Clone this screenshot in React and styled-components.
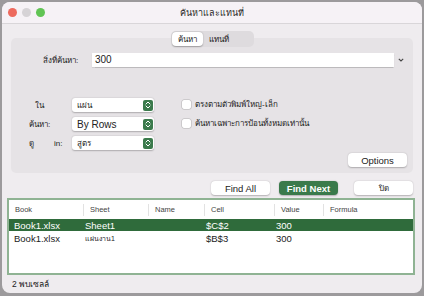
import React from "react";
import styled, { createGlobalStyle } from "styled-components";

const Global = createGlobalStyle`
  html, body { margin: 0; padding: 0; background: #9c9a9c; }
  body { font-family: "Liberation Sans", Arial, "Noto Sans", sans-serif; }
  #root { width: 424px; height: 296px; }
`;

const Frame = styled.div`
  width: 424px;
  height: 296px;
  box-sizing: border-box;
  padding: 2px 2px 3px 2px;
  background: #9c9a9c;
`;

const Window = styled.div`
  height: 100%;
  border-radius: 8px;
  background: #efecef;
  overflow: hidden;
  display: flex;
  flex-direction: column;
`;

const TitleBar = styled.div`
  height: 21px;
  flex: none;
  background: #f6f2f6;
  border-bottom: 1px solid #d9d6d9;
  display: flex;
  align-items: center;
  position: relative;
  padding-left: 6px;
  gap: 5px;
`;

const Light = styled.span`
  width: 9px;
  height: 9px;
  border-radius: 50%;
  background: ${p => p.$c};
`;

const Title = styled.div`
  position: absolute;
  left: 0;
  right: 0;
  text-align: center;
  font-size: 9px;
  color: #2a2a2a;
  pointer-events: none;
`;

const Body = styled.div`
  flex: 1;
  display: flex;
  flex-direction: column;
  padding: 7px 7px 0 7px;
`;

const Tabs = styled.div`
  align-self: center;
  position: relative;
  z-index: 1;
  display: flex;
  background: #dedbde;
  border-radius: 5px;
  padding: 1px;
  width: 83px;
  box-sizing: border-box;
  height: 16px;
`;

const Tab = styled.div`
  font-size: 8px;
  padding: 0 6px;
  display: flex;
  align-items: center;
  border-radius: 4px;
  color: #222;
  background: ${p => (p.$active ? "#ffffff" : "transparent")};
  box-shadow: ${p => (p.$active ? "0 0.5px 1.5px rgba(0,0,0,0.3)" : "none")};
`;

const Panel = styled.div`
  margin: -9px 2px 0 2px;
  background: #e6e3e6;
  border-radius: 5px;
  height: 135px;
  box-sizing: border-box;
  padding: 15px 0 6px 0;
  display: flex;
  flex-direction: column;
`;

const FindRow = styled.div`
  display: flex;
  align-items: center;
  height: 14px;
`;

const FindLabel = styled.div`
  width: 81px;
  box-sizing: border-box;
  padding-left: 32px;
  font-size: 8px;
  color: #222;
`;

const TextInput = styled.div`
  width: 302px;
  height: 14px;
  background: #fff;
  box-shadow: 0 0.5px 1px rgba(0,0,0,0.18);
  font-size: 10px;
  line-height: 14px;
  padding-left: 3px;
  box-sizing: border-box;
  color: #222;
`;

const Chevron = styled.svg`
  margin-left: 4px;
`;

const OptionsArea = styled.div`
  display: flex;
  margin-top: 31px;
`;

const SelectGrid = styled.div`
  display: grid;
  grid-template-columns: 43px 82px;
  row-gap: 5px;
  padding-left: 18px;
  align-items: center;
`;

const Label = styled.div`
  font-size: 8px;
  color: #222;
  display: flex;
  align-items: baseline;
  gap: 20px;
  padding-left: ${p => (p.$indent ? "6px" : "0")};
`;

const Select = styled.div`
  height: 14px;
  background: #fff;
  border-radius: 3px;
  box-shadow: 0 0.5px 1.5px rgba(0,0,0,0.25);
  display: flex;
  align-items: center;
  justify-content: space-between;
  padding: 0 1px 0 5px;
  font-size: ${p => (p.$small ? "8px" : "10px")};
  color: #222;
`;

const Stepper = styled.div`
  width: 10px;
  height: 11px;
  background: #3b7a4c;
  border-radius: 2px;
  display: flex;
  align-items: center;
  justify-content: center;
`;

const Checks = styled.div`
  margin-left: 28px;
  display: flex;
  flex-direction: column;
  gap: 6px;
`;

const CheckRow = styled.div`
  display: flex;
  align-items: center;
  gap: 4px;
  font-size: 8px;
  color: #222;
`;

const Box = styled.span`
  width: 9px;
  height: 9px;
  background: #fff;
  border-radius: 2px;
  box-shadow: 0 0 0 0.5px rgba(0,0,0,0.22);
`;

const PanelFooter = styled.div`
  margin-top: auto;
  display: flex;
  justify-content: flex-end;
  padding-right: 6px;
`;

const Button = styled.div`
  width: 59px;
  height: 14px;
  border-radius: 4px;
  display: flex;
  align-items: center;
  justify-content: center;
  font-size: ${p => (p.$small ? "8px" : "9.5px")};
  font-weight: ${p => (p.$primary ? 700 : 400)};
  background: ${p => (p.$primary ? "#3a7a4b" : "#fff")};
  color: ${p => (p.$primary ? "#fff" : "#222")};
  box-shadow: 0 0.5px 1.5px rgba(0,0,0,0.25);
`;

const ButtonRow = styled.div`
  display: flex;
  justify-content: flex-end;
  gap: 9px;
  margin-top: 8px;
  padding-right: 2px;
  & > div:last-child { margin-left: 7px; }
`;

const Results = styled.div`
  margin: 3px 0 0 -2px;
  height: 77px;
  flex: none;
  border: 2px solid #8fb393;
  background: #fff;
  box-sizing: border-box;
`;

const Row = styled.div`
  display: grid;
  grid-template-columns: 74px 65px 56px 70px 49px 1fr;
  height: ${p => (p.$head ? "16px" : "12px")};
  align-items: center;
  background: ${p => (p.$sel ? "#2f6b3b" : "transparent")};
  color: ${p => (p.$sel ? "#fff" : "#222")};
  margin-bottom: ${p => (p.$head ? "3px" : "1px")};
`;

const HeadCell = styled.div`
  font-size: 7.5px;
  color: #444;
  padding-left: 6px;
  border-left: ${p => (p.$first ? "none" : "1px solid #e2e2e2")};
  height: 12px;
  line-height: 12px;
  margin-top: 4px;
`;

const Cell = styled.div`
  font-size: ${p => (p.$small ? "7px" : "9.5px")};
  padding-left: ${p => (p.$first ? "5px" : "2px")};
`;

const Status = styled.div`
  font-size: 8.5px;
  line-height: 10px;
  color: #222;
  padding: 4px 0 0 3px;
`;

const StepIcon = () => (
  <svg width="6" height="8" viewBox="0 0 6 8">
    <path d="M1 3 L3 1 L5 3 M1 5 L3 7 L5 5" fill="none" stroke="#fff" strokeWidth="1" strokeLinecap="round" strokeLinejoin="round" />
  </svg>
);

export default function App() {
  return (
    <>
      <Global />
      <Frame>
        <Window>
          <TitleBar>
            <Light $c="#ed6a5e" />
            <Light $c="#d6d3d6" />
            <Light $c="#61c454" />
            <Title>ค้นหาและแทนที่</Title>
          </TitleBar>
          <Body>
            <Tabs>
              <Tab $active>ค้นหา</Tab>
              <Tab>แทนที่</Tab>
            </Tabs>
            <Panel>
              <FindRow>
                <FindLabel>สิ่งที่ค้นหา:</FindLabel>
                <TextInput>300</TextInput>
                <Chevron width="6" height="4" viewBox="0 0 6 4">
                  <path d="M0.8 0.8 L3 3 L5.2 0.8" fill="none" stroke="#444" strokeWidth="1.1" />
                </Chevron>
              </FindRow>
              <OptionsArea>
                <SelectGrid>
                  <Label $indent>ใน</Label>
                  <Select $small>แผ่น<Stepper><StepIcon /></Stepper></Select>
                  <Label>ค้นหา:</Label>
                  <Select>By Rows<Stepper><StepIcon /></Stepper></Select>
                  <Label><span>ดู</span><span>in:</span></Label>
                  <Select $small>สูตร<Stepper><StepIcon /></Stepper></Select>
                </SelectGrid>
                <Checks>
                  <CheckRow><Box />ตรงตามตัวพิมพ์ใหญ่-เล็ก</CheckRow>
                  <CheckRow><Box />ค้นหาเฉพาะการป้อนทั้งหมดเท่านั้น</CheckRow>
                </Checks>
              </OptionsArea>
              <PanelFooter>
                <Button>Options</Button>
              </PanelFooter>
            </Panel>
            <ButtonRow>
              <Button>Find All</Button>
              <Button $primary>Find Next</Button>
              <Button $small>ปิด</Button>
            </ButtonRow>
            <Results>
              <Row $head>
                <HeadCell $first>Book</HeadCell>
                <HeadCell>Sheet</HeadCell>
                <HeadCell>Name</HeadCell>
                <HeadCell>Cell</HeadCell>
                <HeadCell>Value</HeadCell>
                <HeadCell>Formula</HeadCell>
              </Row>
              <Row $sel>
                <Cell $first>Book1.xlsx</Cell>
                <Cell>Sheet1</Cell>
                <Cell />
                <Cell>$C$2</Cell>
                <Cell>300</Cell>
                <Cell />
              </Row>
              <Row>
                <Cell $first>Book1.xlsx</Cell>
                <Cell $small>แผ่นงาน1</Cell>
                <Cell />
                <Cell>$B$3</Cell>
                <Cell>300</Cell>
                <Cell />
              </Row>
            </Results>
            <Status>2 พบเซลล์</Status>
          </Body>
        </Window>
      </Frame>
    </>
  );
}
